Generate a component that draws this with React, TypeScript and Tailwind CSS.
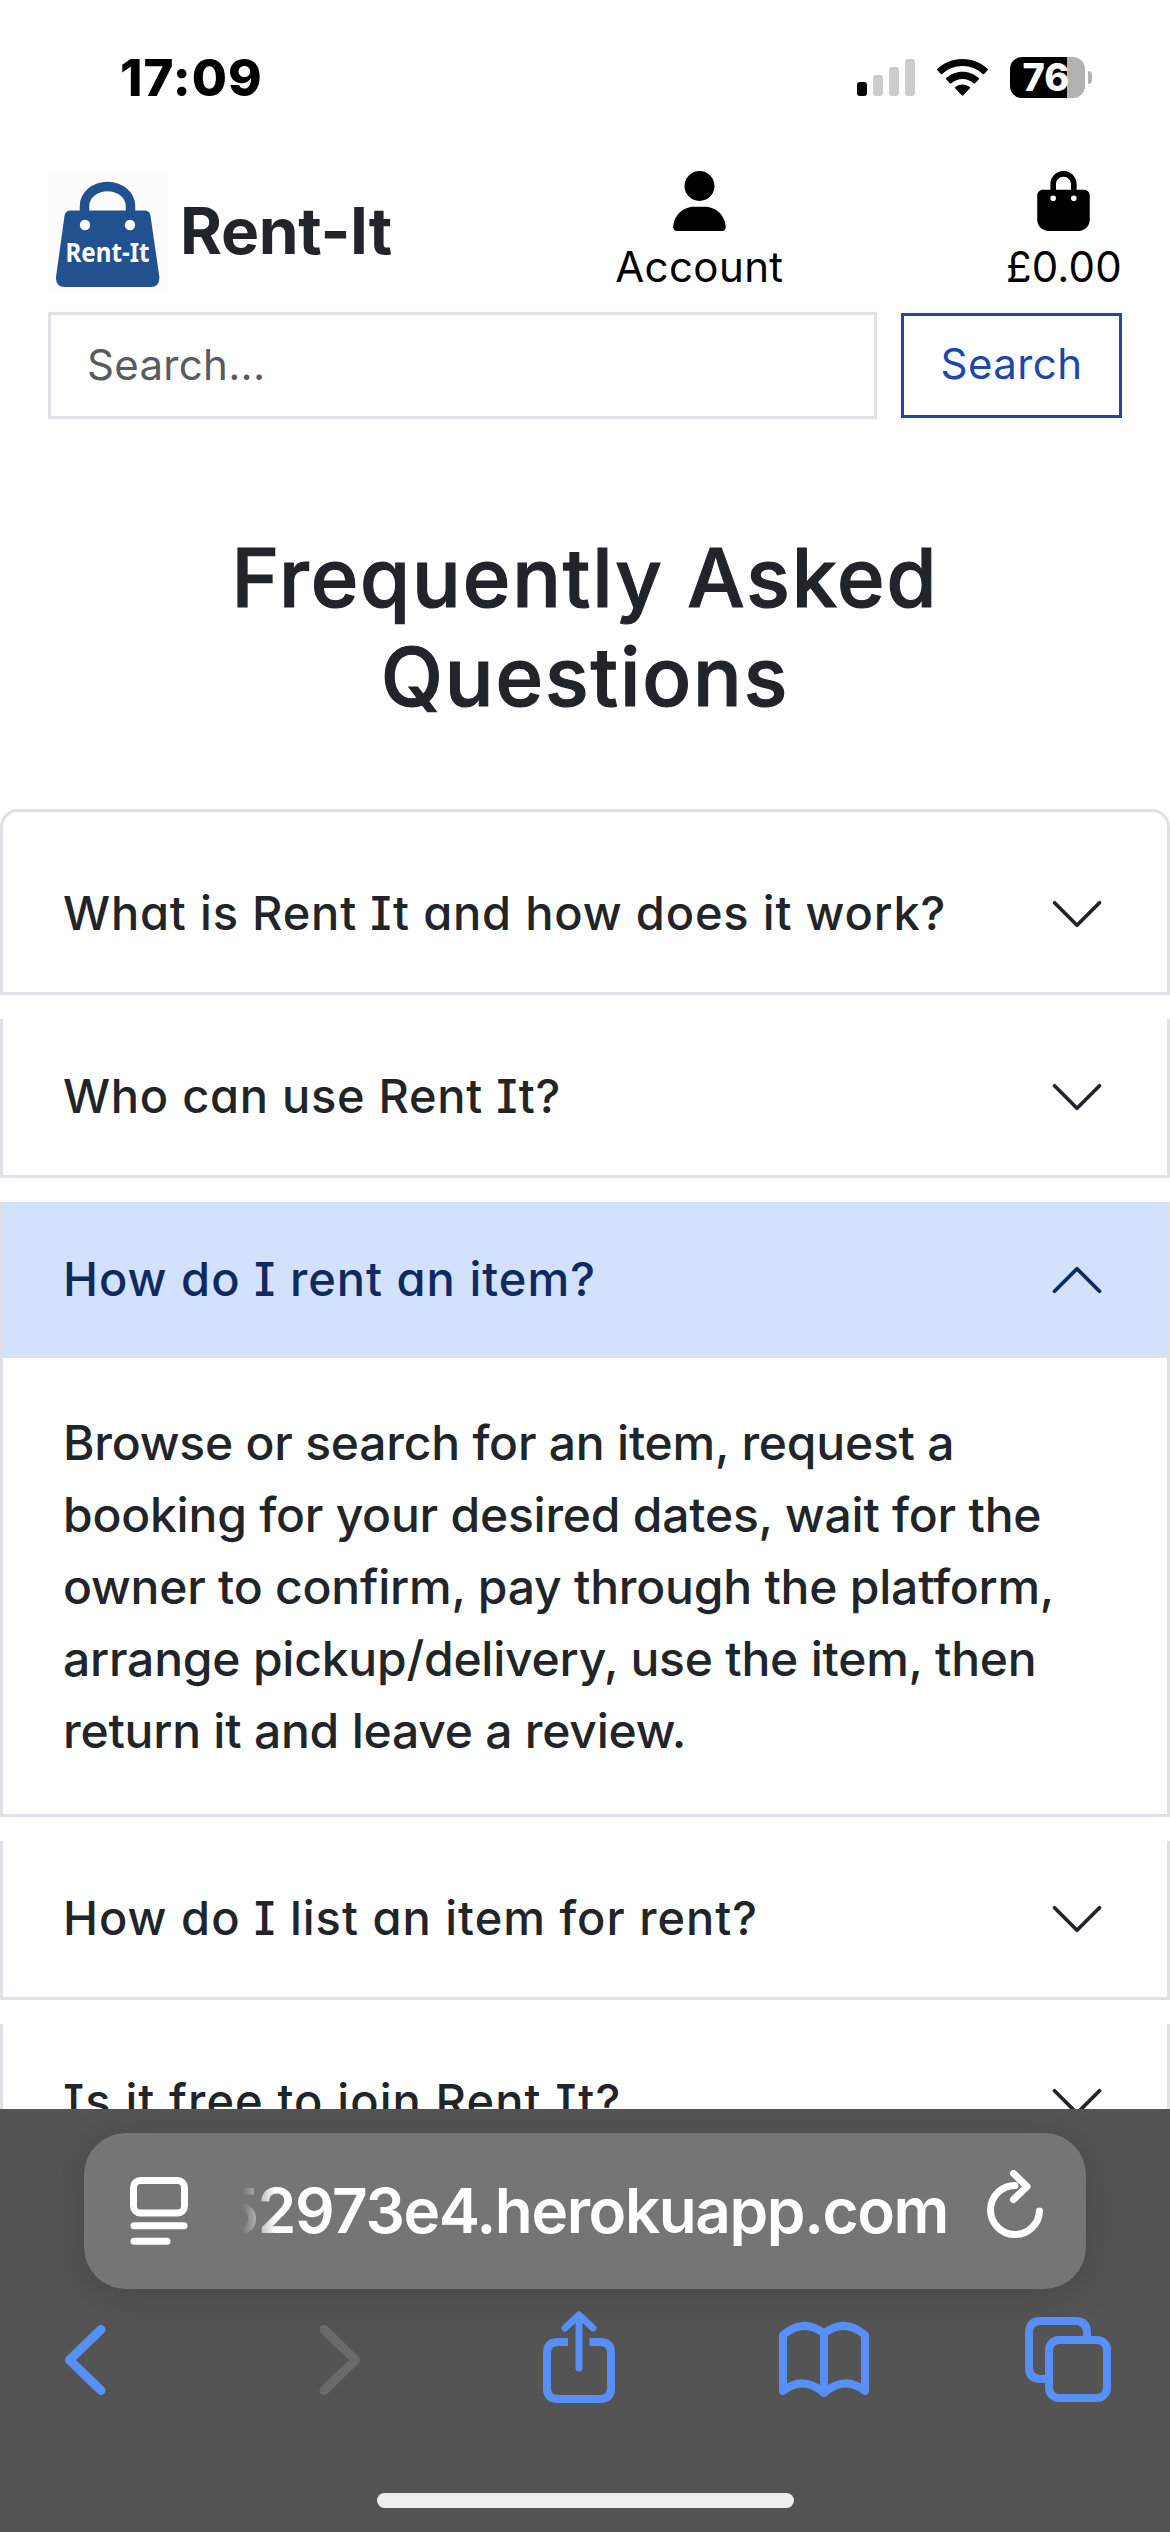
import React from "react";
import { FaUser, FaBagShopping } from "react-icons/fa6";

const LEX = "font-['Inter','Liberation_Sans',sans-serif] [font-feature-settings:'cv11','cv08']";

function StatusBar() {
  return (
    <div className="flex h-[173px] items-start justify-between pl-[120px] pr-[78px]">
      <div className="mt-[48px] text-[51px] font-[760] leading-[60px] tracking-[1px] text-black">17:09</div>
      <div className="mt-[57px] flex h-[41px]">
        <div className="mr-[22px] flex h-[39px] items-end gap-[6px]">
          <span className="h-[14px] w-[10px] rounded-[3px] bg-black" />
          <span className="h-[21px] w-[10px] rounded-[3px] bg-[#cccccc]" />
          <span className="h-[29px] w-[10px] rounded-[3px] bg-[#cccccc]" />
          <span className="h-[37px] w-[10px] rounded-[3px] bg-[#cccccc]" />
        </div>
        <svg className="mr-[22px] mt-[2px]" width="51" height="37" viewBox="0 0 51 37">
          <path d="M25.5 0C35.4 0 44.2 3.8 50.6 9.8q.7.7 0 1.4l-3.500 3.700q-.7.7-1.400 0C40.400 10 33.300 7 25.500 7S10.600 10 5.300 14.900q-.7.7-1.400 0L.4 11.200q-.7-.7 0-1.400C6.800 3.800 15.600 0 25.500 0Z" />
          <path d="M25.500 12.800c6.300 0 12 2.400 16.200 6.300q.8.7 0 1.500l-3.600 3.600q-.7.7-1.500 0c-2.900-2.700-6.800-4.300-11.100-4.300s-8.200 1.600-11.100 4.300q-.8.7-1.500 0l-3.600-3.600q-.8-.8 0-1.500c4.200-3.900 9.900-6.300 16.200-6.300Z" />
          <path d="M25.500 25.400c2.800 0 5.300 1 7.200 2.700q.8.7 0 1.500l-6.400 6.700q-.8.800-1.600 0l-6.400-6.700q-.8-.8 0-1.500c1.900-1.700 4.400-2.700 7.200-2.700Z" />
        </svg>
        <div className="flex h-[41px] w-[75px] items-center justify-center rounded-[12px] bg-[linear-gradient(90deg,#000_57px,#b2b2b2_57px)] text-[38px] font-extrabold leading-[41px] text-white">
          <span className="-ml-[3px]">76</span>
        </div>
        <span className="ml-[3px] mt-[14px] h-[13px] w-[4px] rounded-r-full bg-[#b2b2b2]" />
      </div>
    </div>
  );
}

function Logo() {
  return (
    <svg className="shrink-0" width="120" height="120" viewBox="0 0 120 120">
      <rect width="120" height="120" fill="#fcfcfc" />
      <path d="M36.500 41V33a23 19.500 0 0 1 46 0v8" fill="none" stroke="#21518f" strokeWidth="9.500" />
      <path d="M23 37.500h73q6 0 6.500 5.500L111.400 104q.4 10-9 10H17q-9.500 0-9-10L16.500 43q.5-5.500 6.500-5.500Z" fill="#21518f" />
      <circle cx="37" cy="52" r="5.200" fill="#fff" />
      <circle cx="82" cy="52" r="5.200" fill="#fff" />
      <text x="59.500" y="89" textAnchor="middle" textLength="84" lengthAdjust="spacingAndGlyphs" fill="#fff" className="font-['Noto_Sans',sans-serif] text-[27px] font-bold">Rent-It</text>
    </svg>
  );
}

function Header() {
  return (
    <header className="px-[48px]">
      <div className="flex h-[120px] justify-between">
        <div className="flex">
          <Logo />
          <span className="ml-[12px] mt-[19px] text-[64px] font-bold leading-[78px] tracking-[-0.300px] text-[#212529]">Rent-It</span>
        </div>
        <div className="ml-[1px] flex flex-col items-center text-black">
          <FaUser className="-mt-[2px] h-[60px] w-[53px] shrink-0" />
          <span className="mt-[4px] text-[42px] leading-[63px] tracking-[0.400px]">Account</span>
        </div>
        <div className="flex flex-col items-center text-black">
          <FaBagShopping className="-mt-[2px] h-[60px] w-[53px] shrink-0" />
          <span className="mt-[4px] text-[42px] leading-[63px] tracking-[0.200px]">£0.00</span>
        </div>
      </div>
      <div className="mt-[19px] flex items-center gap-[24px]">
        <div className="h-[107px] w-[829px] border-[3px] border-[#dee2e6] pl-[36px] text-[42px] leading-[99px] tracking-[0.300px] text-[#595c5f]">Search...</div>
        <button className="h-[105px] w-[221px] border-[3px] border-[#1c48ad] pb-[4px] text-center text-[42px] leading-[95px] tracking-[0.400px] text-[#1c48ad]">Search</button>
      </div>
    </header>
  );
}

function Chevron({ up = false }: { up?: boolean }) {
  return (
    <svg className={up ? "rotate-180" : ""} width="60" height="60" viewBox="0 0 16 16" fill="none" stroke={up ? "#0f2a60" : "#212529"} strokeLinecap="round" strokeLinejoin="round">
      <path d="m2 5 6 6 6-6" />
    </svg>
  );
}

const items = [
  { q: "What is Rent It and how does it work?", cls: "tracking-[0.8px]" },
  { q: "Who can use Rent It?", cls: "tracking-[0.7px]" },
  {
    q: "How do I rent an item?",
    cls: "tracking-[1px]",
    a: ["Browse or search for an item, request a", "booking for your desired dates, wait for the", "owner to confirm, pay through the platform,", "arrange pickup/delivery, use the item, then", "return it and leave a review."],
  },
  { q: "How do I list an item for rent?", cls: "tracking-[1px]" },
  { q: "Is it free to join Rent It?", cls: "tracking-[1.1px]" },
];

function Accordion() {
  return (
    <div className="flex flex-col gap-[24px]">
      {items.map((it, i) => (
        <div key={it.q} className={"border-x-[3px] border-b-[3px] border-[#dee2e6] " + (i === 0 ? "rounded-t-[18px] border-t-[3px] pt-[24px]" : "")}>
          <div className={"flex h-[156px] items-center justify-between px-[60px] " + (it.a ? "bg-[#d2e1fc] text-[#0f2a60] shadow-[inset_0_-3px_0_#dee2e6]" : "text-[#212529]")}>
            <span className={LEX + " whitespace-nowrap pb-[3px] text-[47px] font-[450] leading-[58px] " + it.cls}>{it.q}</span>
            <Chevron up={!!it.a} />
          </div>
          {it.a && (
            <div className="px-[60px] pb-[47px] pt-[49px] text-[48px] font-[460] leading-[72px] tracking-[-0.220px] text-[#212529]">
              {it.a.map((l) => (
                <div key={l} className="whitespace-nowrap">{l}</div>
              ))}
            </div>
          )}
        </div>
      ))}
    </div>
  );
}

function BrowserBar() {
  return (
    <div className="relative h-[423px] shrink-0 bg-[#545454] pt-[24px]">
      <div className="mx-[84px] flex h-[156px] items-center rounded-[42px] bg-[#757575] shadow-[0_6px_40px_rgba(0,0,0,0.16)]">
        <svg className="ml-[46px] shrink-0" width="58" height="68" viewBox="0 0 58 68" fill="none" stroke="#fff" strokeWidth="7" strokeLinecap="round">
          <rect x="3.500" y="3.500" width="51" height="32.500" rx="7" />
          <path d="M4 48.700h50M4 64.200h33" />
        </svg>
        <div className="ml-[54px] flex w-[706px] shrink-0 justify-end overflow-hidden whitespace-nowrap text-[62px] font-semibold leading-[80px] tracking-[-1.400px] text-white [mask-image:linear-gradient(90deg,transparent,#000_34px)]">
          52973e4.herokuapp.com
        </div>
        <svg className="-mt-[4px] ml-[37px] shrink-0" width="58" height="78" viewBox="0 0 58 78" fill="none" stroke="#fff" strokeWidth="7" strokeLinecap="round" strokeLinejoin="round">
          <path d="M30 15.500A24.500 24.500 0 1 0 54.500 41" />
          <path d="M28.500 3.500 42 16.500 28.500 29.500" />
        </svg>
      </div>
      <div className="mt-[20px] flex">
        <svg className="shrink-0" width="1170" height="110" viewBox="0 2309 1170 110" fill="none" stroke="#588ff7" strokeWidth="8" strokeLinecap="round" strokeLinejoin="round">
          <path d="M101 2329.500 69.500 2360 101 2390.500" strokeWidth="9" />
          <path d="M324 2329.500 355.500 2360 324 2390.500" stroke="#6b6b6b" strokeWidth="9" />
          <path d="M568 2342h-10q-11 0-11 11v35q0 11 11 11h42q11 0 11-11v-35q0-11-11-11h-10.500" strokeLinecap="butt" />
          <path d="M579 2316v52M565 2328l14-13 14 13" strokeWidth="7" />
          <path d="M824 2333.500q-20-16-41 1.500v56q20-16 41 2 21-18 41-2v-56q-21-17.500-41-1.500v59.500" />
          <path d="M1045 2379h-4q-12 0-12-12v-34q0-12 12-12h34q12 0 12 12v4" strokeLinecap="butt" />
          <rect x="1049" y="2340" width="58" height="58" rx="10" />
        </svg>
      </div>
      <div className="mx-auto mt-[74px] h-[15px] w-[417px] rounded-full bg-[#eeeeee]" />
    </div>
  );
}

export default function App() {
  return (
    <div className="flex h-[2532px] w-[1170px] flex-col overflow-hidden bg-white font-['Inter','Liberation_Sans',sans-serif]">
      <div className="h-[2109px] shrink-0 overflow-hidden">
        <StatusBar />
        <Header />
        <h1 className={LEX + " pb-[82px] pt-[110px] text-center text-[81px] font-medium leading-[99px] tracking-[1.900px] text-[#212529] [-webkit-text-stroke:1.2px_#212529]"}>
          Frequently Asked
          <br />
          Questions
        </h1>
        <Accordion />
      </div>
      <BrowserBar />
    </div>
  );
}
